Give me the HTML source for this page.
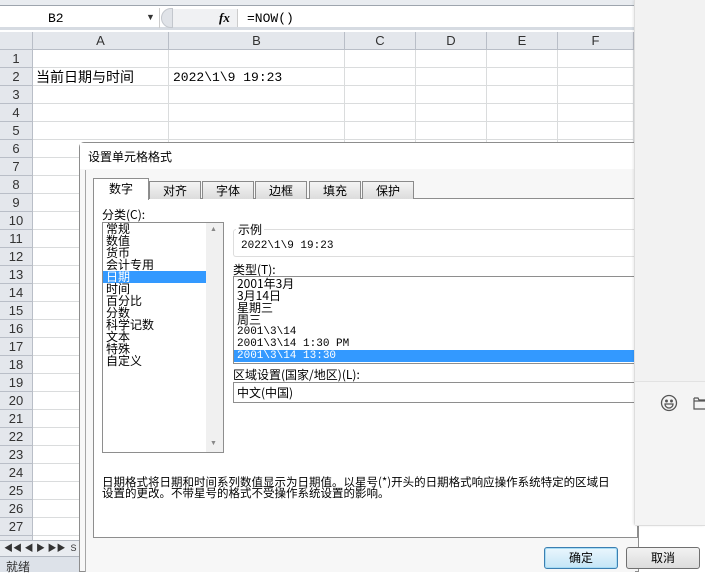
<!DOCTYPE html>
<html><head><meta charset="utf-8"><style>
*{box-sizing:border-box;margin:0;padding:0}
body{width:705px;height:572px;overflow:hidden;position:relative;background:#fff;font-family:"Liberation Sans","Noto Sans CJK SC",sans-serif;font-size:12px;color:#000}
.a{position:absolute}
.mono{font-family:"Liberation Mono","Noto Sans CJK SC",monospace}
.cj{font-family:"Noto Sans CJK SC","WenQuanYi Zen Hei",sans-serif}
.hd{background:#e4e7ec;border-right:1px solid #b9bec7;border-bottom:1px solid #b9bec7;color:#333;text-align:center;font-size:13px}
.gl{background:#dadcdd}
.tab{position:absolute;top:181px;height:18px;width:52px;border:1px solid #8a8a8a;border-bottom:none;background:linear-gradient(#f4f4f4,#dcdcdc);text-align:center;font-size:12px;line-height:17px}
.li{font-size:12px;line-height:12px;height:12px;padding-left:3px;overflow:visible;white-space:nowrap}
</style></head><body>
<div class="a" style="left:0;top:0;width:634px;height:6px;background:#e9ecf0;border-bottom:1px solid #9ea5ae"></div>
<div class="a" style="left:0;top:6px;width:634px;height:24px;background:#fff;border-bottom:3px solid #d6dbe2"></div>
<div class="a" style="left:0;top:8px;width:160px;height:20px;border-right:1px solid #ccc"></div>
<div class="a mono" style="left:48px;top:11px;font-size:13px">B2</div>
<div class="a" style="left:146px;top:12px;font-size:9px;color:#333">▼</div>
<div class="a" style="left:161px;top:8px;width:12px;height:20px;border-radius:10px 0 0 10px;background:#e0e3e8;border:1px solid #c3c7cd"></div>
<div class="a" style="left:173px;top:9px;width:65px;height:18px;background:#f0f1f3;border-right:1px solid #ccc"></div>
<div class="a" style="left:219px;top:10px;font-style:italic;font-weight:bold;font-family:'Liberation Serif',serif;font-size:13px">fx</div>
<div class="a mono" style="left:247px;top:11px;font-size:13px">=NOW()</div>
<div class="a" style="left:0;top:32px;width:634px;height:509px"></div>
<div class="a hd" style="left:0;top:32px;width:33px;height:18px;background:#e4e7ec"></div>
<div id="cols"></div>
<script>
var cols=[["A",33,169],["B",169,345],["C",345,416],["D",416,487],["E",487,558],["F",558,634]];
var h="";
cols.forEach(function(c){h+='<div class="a hd" style="left:'+c[1]+'px;top:32px;width:'+(c[2]-c[1])+'px;height:18px;line-height:18px">'+c[0]+'</div>';
h+='<div class="a gl" style="left:'+(c[2]-1)+'px;top:50px;width:1px;height:491px"></div>';});
for(var r=1;r<=28;r++){var y=50+(r-1)*18;h+='<div class="a hd" style="left:0;top:'+y+'px;width:33px;height:18px;line-height:18px">'+r+'</div>';
h+='<div class="a gl" style="left:33px;top:'+(y+17)+'px;width:601px;height:1px"></div>';}
document.getElementById("cols").outerHTML=h;
</script>
<div class="a cj" style="left:36px;top:68px;font-size:14px;line-height:18px">当前日期与时间</div>
<div class="a mono" style="left:173px;top:69px;font-size:13px;line-height:18px">2022\1\9 19:23</div>
<div class="a" style="left:0;top:540px;width:80px;height:16px;background:#e9ecf0;border-top:1px solid #b0b6bf;font-size:9px;color:#333;padding-left:4px;line-height:15px">◀◀ ◀ ▶ ▶▶ &nbsp;S</div>
<div class="a" style="left:0;top:556px;width:80px;height:16px;background:#dde2e9;border-top:1px solid #b0b6bf"></div>
<div class="a cj" style="left:6px;top:558px;font-size:12px;color:#333">就绪</div>
<div class="a" style="left:79px;top:142px;width:560px;height:430px;background:#f7f7f7;border:1px solid #8d8d8d;border-radius:5px 5px 0 0"></div>
<div class="a" style="left:80px;top:143px;width:555px;height:26px;background:#fff"></div>
<div class="a cj" style="left:88px;top:148px;font-size:12px">设置单元格格式</div>
<div class="a" style="left:85px;top:170px;width:550px;height:402px;background:#f7f7f7;border-left:1px solid #a5a5a5"></div>
<div class="a" style="left:93px;top:198px;width:545px;height:340px;background:#fff;border:1px solid #8e8e8e"></div>
<div class="a cj" style="left:93px;top:178px;width:56px;height:22px;background:#fff;border:1px solid #8e8e8e;border-bottom:none;text-align:center;line-height:20px">数字</div>
<div class="tab cj" style="left:149px">对齐</div>
<div class="tab cj" style="left:202px">字体</div>
<div class="tab cj" style="left:255px">边框</div>
<div class="tab cj" style="left:309px">填充</div>
<div class="tab cj" style="left:362px">保护</div>
<div class="a cj" style="left:102px;top:206px">分类(C):</div>
<div class="a" style="left:102px;top:222px;width:122px;height:231px;border:1px solid #8e8e8e;background:#fff"></div>
<div class="a" style="left:206px;top:223px;width:17px;height:229px;background:#f0f0f0"></div>
<div class="a" style="left:210px;top:226px;font-size:7px;color:#888">▲</div>
<div class="a" style="left:210px;top:440px;font-size:7px;color:#888">▼</div>
<div class="a cj" style="left:103px;top:223px;width:103px">
<div class="li">常规</div><div class="li">数值</div><div class="li">货币</div><div class="li">会计专用</div>
<div class="li" style="background:#3399ff;color:#fff">日期</div><div class="li">时间</div><div class="li">百分比</div><div class="li">分数</div><div class="li">科学记数</div><div class="li">文本</div><div class="li">特殊</div><div class="li">自定义</div></div>
<div class="a" style="left:233px;top:229px;width:405px;height:28px;border:1px solid #ddd;border-right:none;border-radius:3px"></div>
<div class="a cj" style="left:236px;top:221px;background:#fff;padding:0 2px">示例</div>
<div class="a mono" style="left:241px;top:240px;font-size:11px">2022\1\9 19:23</div>
<div class="a cj" style="left:233px;top:261px">类型(T):</div>
<div class="a" style="left:233px;top:276px;width:405px;height:88px;border:1px solid #8e8e8e;border-right:none;background:#fff"></div>
<div class="a cj" style="left:234px;top:278px;width:404px">
<div class="li">2001年3月</div><div class="li">3月14日</div><div class="li">星期三</div><div class="li">周三</div><div class="li mono" style="font-size:11px">2001\3\14</div><div class="li mono" style="font-size:11px">2001\3\14 1:30 PM</div><div class="li mono" style="font-size:11px;background:#3399ff;color:#fff">2001\3\14 13:30</div></div>
<div class="a cj" style="left:233px;top:366px">区域设置(国家/地区)(L):</div>
<div class="a cj" style="left:233px;top:382px;width:405px;height:21px;border:1px solid #8e8e8e;border-right:none;background:#fff;padding-left:3px;line-height:19px">中文(中国)</div>
<div class="a cj" style="left:102px;top:477px;font-size:11.5px;line-height:11px;width:540px;white-space:nowrap">日期格式将日期和时间系列数值显示为日期值。以星号(*)开头的日期格式响应操作系统特定的区域日<br>设置的更改。不带星号的格式不受操作系统设置的影响。</div>
<div class="a cj" style="left:544px;top:547px;width:74px;height:22px;border:1px solid #3c7fb1;border-radius:3px;background:linear-gradient(#eaf6fd,#c4e5f6);text-align:center;line-height:20px;box-shadow:inset 0 0 0 1px #a7dcf5">确定</div>
<div class="a cj" style="left:626px;top:547px;width:74px;height:22px;border:1px solid #707070;border-radius:3px;background:linear-gradient(#f2f2f2,#dcdcdc);text-align:center;line-height:20px">取消</div>
<div class="a" style="left:634px;top:0;width:71px;height:526px;background:#f2f2f2;border-left:1px solid #ddd;border-bottom:1px solid #ddd;border-radius:0 0 0 3px;box-shadow:-1px 0 2px rgba(0,0,0,.08)"></div>
<div class="a" style="left:635px;top:381px;width:70px;height:144px;background:#f4f4f4;border-top:1px solid #e2e2e2"></div>
<svg class="a" style="left:660px;top:394px" width="18" height="18" viewBox="0 0 18 18" fill="none" stroke="#555" stroke-width="1.3"><circle cx="9" cy="9" r="7.5"/><circle cx="6.5" cy="7" r=".8" fill="#555"/><circle cx="11.5" cy="7" r=".8" fill="#555"/><path d="M5 10h8a4 4 0 0 1-8 0z"/></svg>
<svg class="a" style="left:693px;top:396px" width="12" height="14" viewBox="0 0 12 14" fill="none" stroke="#555" stroke-width="1.2"><path d="M1 2h4l1 2h6M1 2v11h11"/><path d="M1 5h11"/></svg>
</body></html>
